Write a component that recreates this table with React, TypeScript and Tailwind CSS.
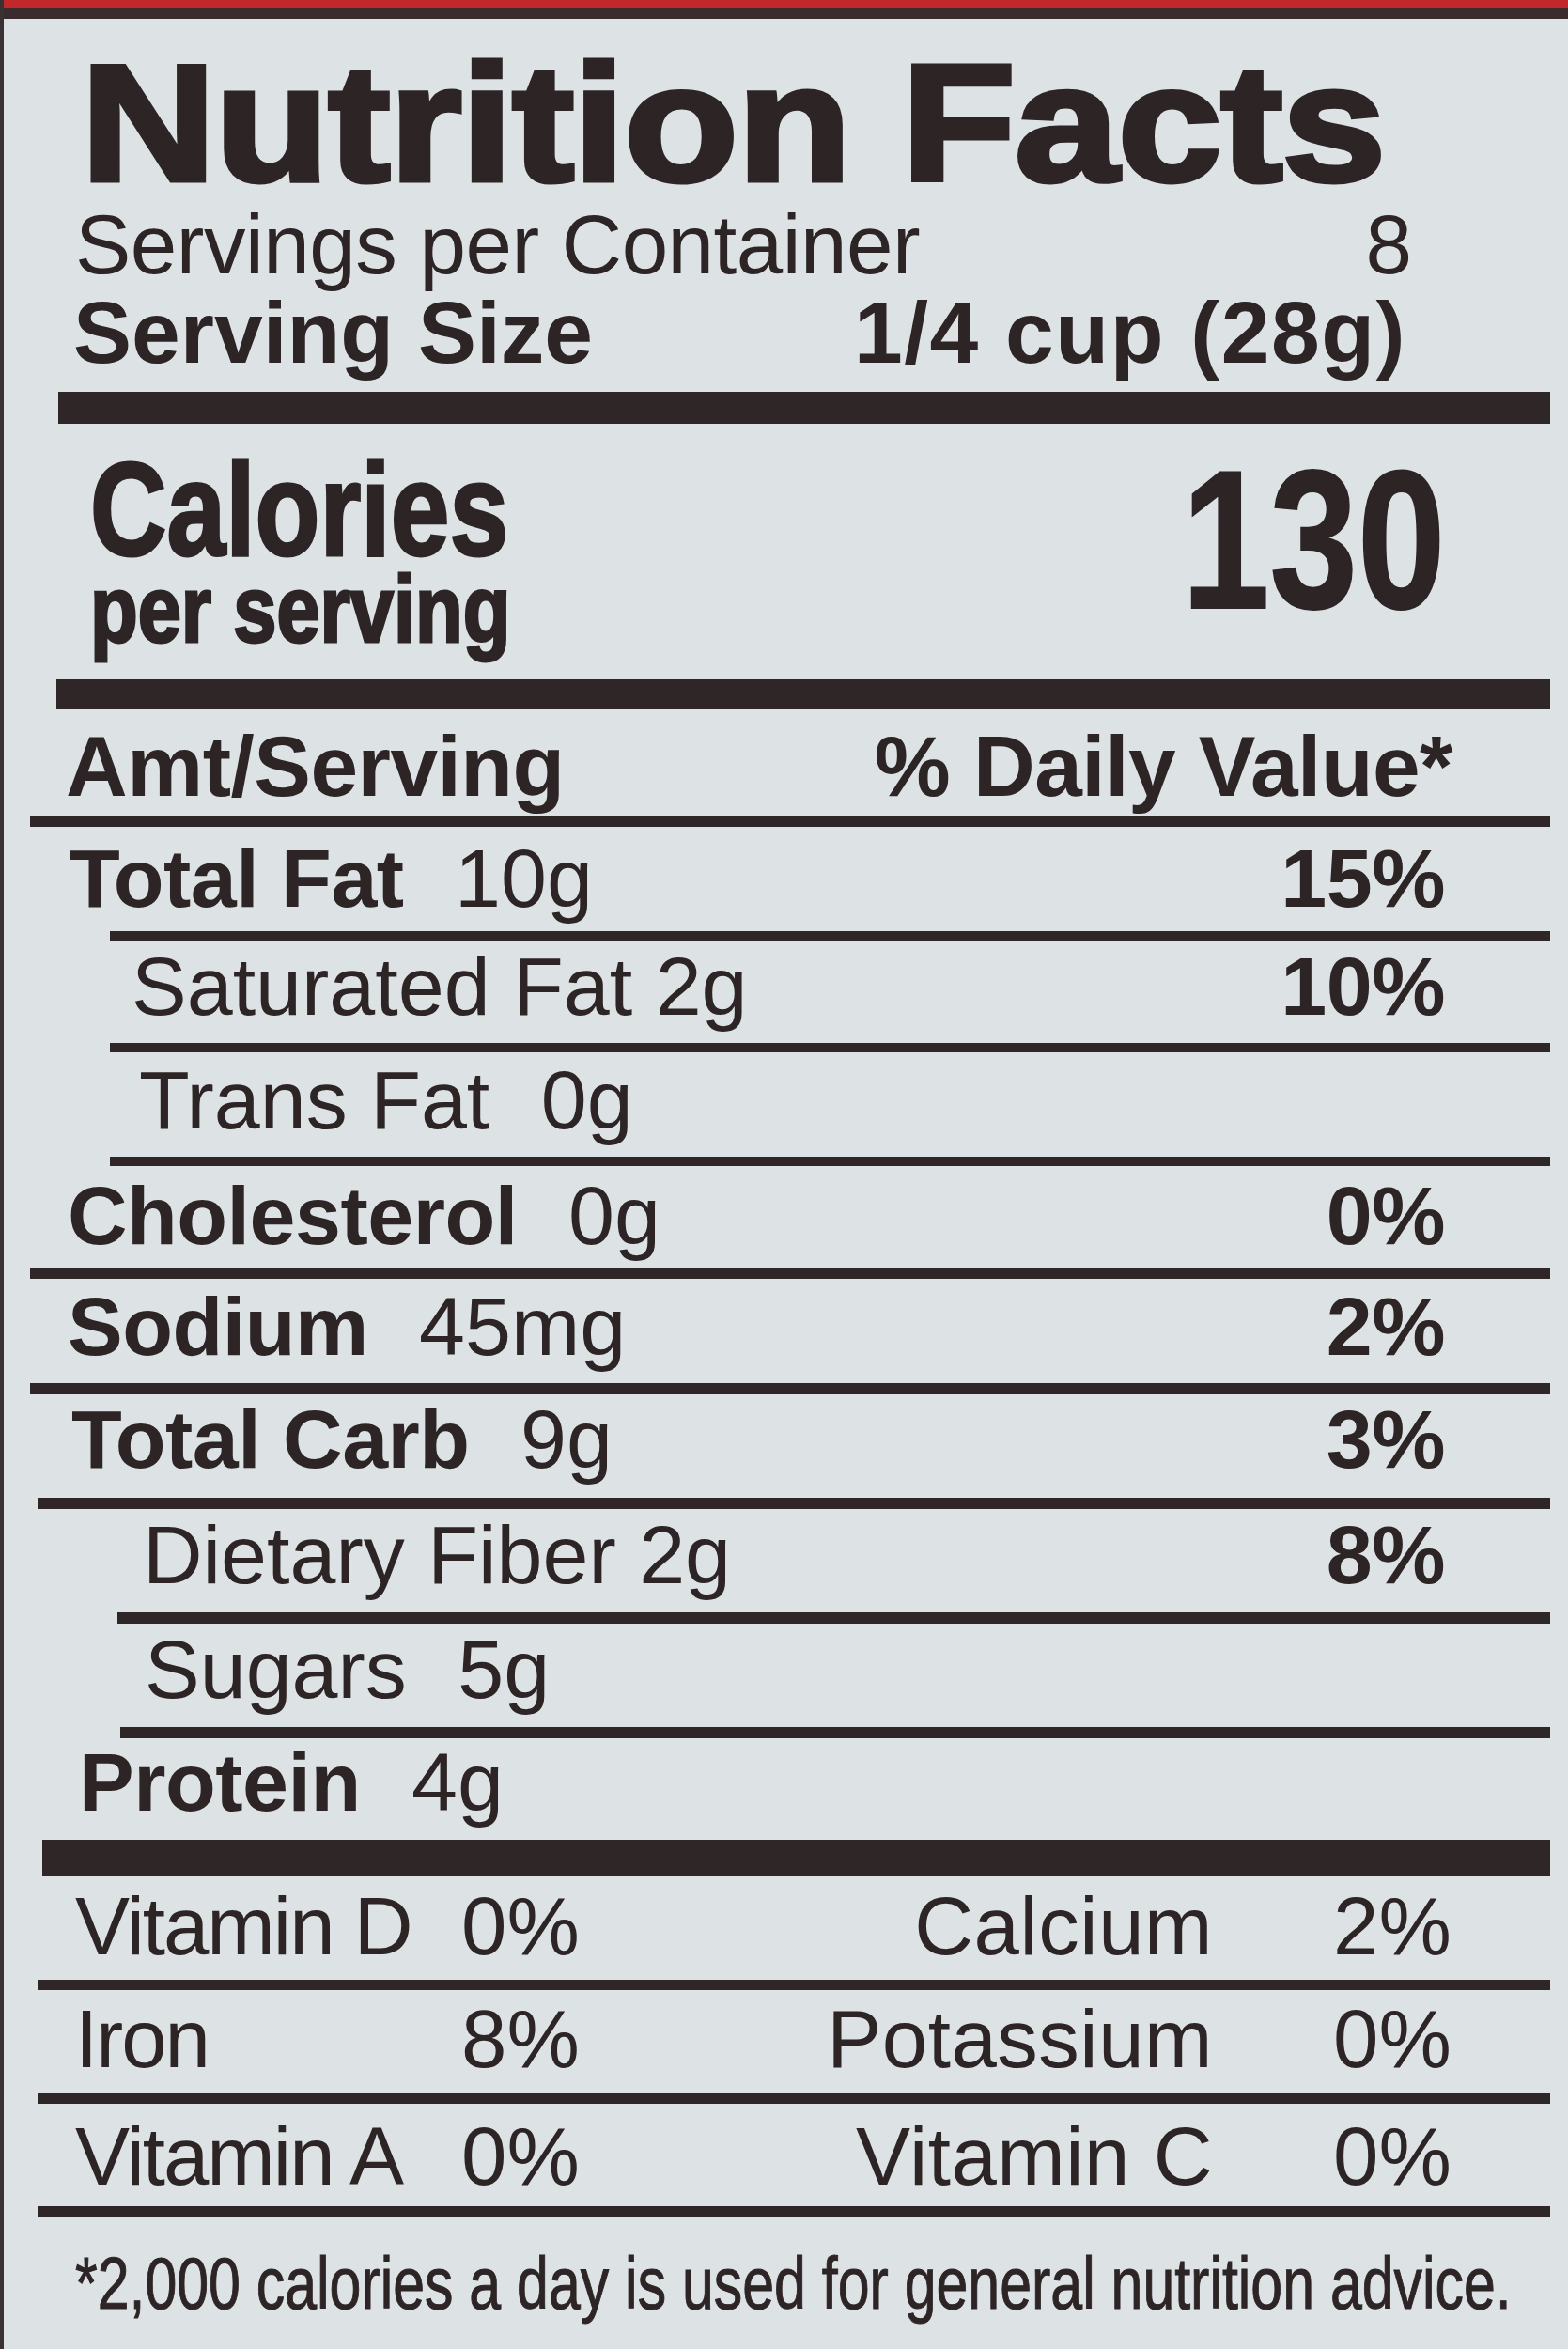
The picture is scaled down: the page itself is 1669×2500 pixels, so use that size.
import React from "react";

type RowProps = {
  cls: string;
  label: string;
  bold?: boolean;
  value?: string;
  pct?: string;
};

function NRow({ cls, label, bold, value, pct }: RowProps) {
  return (
    <div className={`flex items-end justify-between pr-[131px] ${cls}`}>
      <div className="whitespace-nowrap text-[88px] leading-none">
        <span className={bold ? "font-bold tracking-[-0.5px]" : "tracking-[0px]"}>{label}</span>
        {value ? (
          <>
            {" "}
            <span className="ml-[30px]">{value}</span>
          </>
        ) : null}
      </div>
      {pct ? <div className="text-[88px] font-bold leading-none tracking-[-0.5px]">{pct}</div> : null}
    </div>
  );
}

type VRowProps = { cls: string; a: string; ap: string; b: string; bp: string };

function VRow({ cls, a, ap, b, bp }: VRowProps) {
  return (
    <div className={`flex items-end pl-[76px] text-[87px] leading-none whitespace-nowrap ${cls}`}>
      <span className="w-[411px] tracking-[-2px]">{a}</span>
      <span className="w-[150px]">{ap}</span>
      <span className="w-[650px] text-right tracking-[0.5px]">{b}</span>
      <span className="ml-[128px]">{bp}</span>
    </div>
  );
}

export default function App() {
  return (
    <div className="h-[2500px] w-[1669px] overflow-hidden border-l-[4px] border-[#3a3132] bg-[#dde2e5] font-['Liberation_Sans',Arial,sans-serif] text-[#2c2425]">
      {/* top band */}
      <div className="h-[9px] bg-[#c0282b]" />
      <div className="h-[11px] bg-[#3a2b2c]" />

      {/* Title */}
      <div className="mt-[26px] pl-[82px]">
        <span className="inline-block origin-left scale-x-[1.125] text-[177px] font-bold leading-[170px] tracking-[-1px] [-webkit-text-stroke:5px_#2c2425]">
          Nutrition Facts
        </span>
      </div>

      <div className="flex items-end justify-between pl-[76px] pr-[166px] text-[89px] leading-none">
        <span className="tracking-[-0.5px]">Servings per Container</span>
        <span>8</span>
      </div>
      <div className="mt-[3px] flex items-end justify-between pl-[74px] pr-[172px] text-[93px] font-bold leading-none">
        <span className="tracking-[0px]">Serving Size</span>
        <span className="tracking-[1.5px]">1/4 cup (28g)</span>
      </div>

      {/* bar 1 */}
      <div className="ml-[58px] mr-[19px] mt-[16px] h-[34px] bg-[#2e2627]" />

      {/* Calories */}
      <div className="flex h-[272px] items-start justify-between pl-[92px] pr-[131px]">
        <div className="pt-[31px]">
          <div className="origin-left scale-x-[0.8] text-[141px] font-bold leading-[120px] whitespace-nowrap [-webkit-text-stroke:3px_#2c2425]">
            Calories
          </div>
          <div className="mt-[1px] origin-left scale-x-[0.83] text-[100px] font-bold leading-[90px] whitespace-nowrap [-webkit-text-stroke:3px_#2c2425]">
            per serving
          </div>
        </div>
        <div className="pt-[19px]">
          <div className="origin-right scale-x-[0.8] text-[210px] font-bold leading-none [-webkit-text-stroke:2px_#2c2425]">
            130
          </div>
        </div>
      </div>

      {/* bar 2 */}
      <div className="ml-[56px] mr-[19px] h-[32px] bg-[#2e2627]" />

      <div className="mt-[15px] flex items-end justify-between pl-[66px] pr-[123px] text-[91px] font-bold leading-none">
        <span className="tracking-[-0.5px]">Amt/Serving</span>
        <span className="tracking-[-0.5px]">% Daily Value*</span>
      </div>

      <div className="ml-[28px] mr-[19px] mt-[7px] h-[12px] bg-[#2e2627]" />

      <NRow cls="h-[111px] pb-[12px] pl-[70px]" label="Total Fat" bold value="10g" pct="15%" />
      <div className="ml-[113px] mr-[19px] h-[10px] bg-[#2e2627]" />
      <NRow cls="h-[109px] pb-[16px] pl-[136px]" label="Saturated Fat 2g" pct="10%" />
      <div className="ml-[113px] mr-[19px] h-[10px] bg-[#2e2627]" />
      <NRow cls="h-[111px] pb-[16px] pl-[144px]" label="Trans Fat" value="0g" />
      <div className="ml-[113px] mr-[19px] h-[10px] bg-[#2e2627]" />
      <NRow cls="h-[108px] pb-[11px] pl-[68px]" label="Cholesterol" bold value="0g" pct="0%" />
      <div className="ml-[28px] mr-[19px] h-[12px] bg-[#2e2627]" />
      <NRow cls="h-[111px] pb-[16px] pl-[68px]" label="Sodium" bold value="45mg" pct="2%" />
      <div className="ml-[28px] mr-[19px] h-[12px] bg-[#2e2627]" />
      <NRow cls="h-[110px] pb-[18px] pl-[72px]" label="Total Carb" bold value="9g" pct="3%" />
      <div className="ml-[36px] mr-[19px] h-[12px] bg-[#2e2627]" />
      <NRow cls="h-[110px] pb-[17px] pl-[148px]" label="Dietary Fiber 2g" pct="8%" />
      <div className="ml-[121px] mr-[19px] h-[12px] bg-[#2e2627]" />
      <NRow cls="h-[110px] pb-[17px] pl-[150px]" label="Sugars" value="5g" />
      <div className="ml-[124px] mr-[19px] h-[12px] bg-[#2e2627]" />
      <NRow cls="h-[108px] pb-[17px] pl-[80px]" label="Protein" bold value="4g" />

      {/* bar 3 */}
      <div className="ml-[41px] mr-[19px] h-[39px] bg-[#2e2627]" />

      <VRow cls="h-[110px] pb-[14px]" a="Vitamin D" ap="0%" b="Calcium" bp="2%" />
      <div className="ml-[36px] mr-[19px] h-[11px] bg-[#2e2627]" />
      <VRow cls="h-[110px] pb-[15px]" a="Iron" ap="8%" b="Potassium" bp="0%" />
      <div className="ml-[36px] mr-[19px] h-[11px] bg-[#2e2627]" />
      <VRow cls="h-[109px] pb-[10px]" a="Vitamin A" ap="0%" b="Vitamin C" bp="0%" />
      <div className="ml-[36px] mr-[19px] h-[11px] bg-[#2e2627]" />

      <div className="mt-[32px] pl-[76px]">
        <div className="origin-left scale-x-[0.78] text-[78px] leading-none whitespace-nowrap [-webkit-text-stroke:1px_#2c2425]">
          *2,000 calories a day is used for general nutrition advice.
        </div>
      </div>
    </div>
  );
}
